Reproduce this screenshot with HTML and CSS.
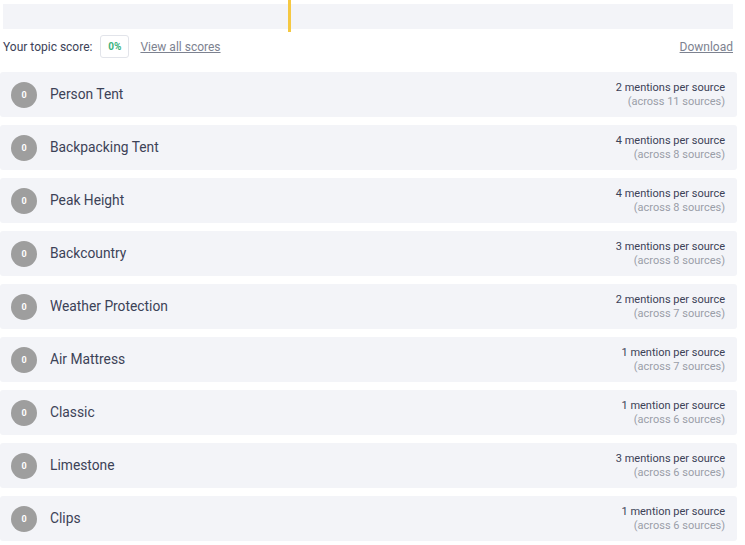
FILE: index.html
```html
<!DOCTYPE html>
<html>
<head>
<meta charset="utf-8">
<link rel="stylesheet" href="styles.css">
</head>
<body>
<div class="page">
  <div class="progress">
    <div class="marker"></div>
  </div>
  <div class="scoreline">
    <div class="score-left">
      <span class="label">Your topic score:</span>
      <span class="score-box">0%</span>
      <a class="link" href="#">View all scores</a>
    </div>
    <a class="link" href="#">Download</a>
  </div>
  <div class="list">
    <div class="row"><span class="badge">0</span><span class="name">Person Tent</span><div class="stats"><div class="main">2 mentions per source</div><div class="sub">(across 11 sources)</div></div></div>
    <div class="row"><span class="badge">0</span><span class="name">Backpacking Tent</span><div class="stats"><div class="main">4 mentions per source</div><div class="sub">(across 8 sources)</div></div></div>
    <div class="row"><span class="badge">0</span><span class="name">Peak Height</span><div class="stats"><div class="main">4 mentions per source</div><div class="sub">(across 8 sources)</div></div></div>
    <div class="row"><span class="badge">0</span><span class="name">Backcountry</span><div class="stats"><div class="main">3 mentions per source</div><div class="sub">(across 8 sources)</div></div></div>
    <div class="row"><span class="badge">0</span><span class="name">Weather Protection</span><div class="stats"><div class="main">2 mentions per source</div><div class="sub">(across 7 sources)</div></div></div>
    <div class="row"><span class="badge">0</span><span class="name">Air Mattress</span><div class="stats"><div class="main">1 mention per source</div><div class="sub">(across 7 sources)</div></div></div>
    <div class="row"><span class="badge">0</span><span class="name">Classic</span><div class="stats"><div class="main">1 mention per source</div><div class="sub">(across 6 sources)</div></div></div>
    <div class="row"><span class="badge">0</span><span class="name">Limestone</span><div class="stats"><div class="main">3 mentions per source</div><div class="sub">(across 6 sources)</div></div></div>
    <div class="row"><span class="badge">0</span><span class="name">Clips</span><div class="stats"><div class="main">1 mention per source</div><div class="sub">(across 6 sources)</div></div></div>
  </div>
</div>
</body>
</html>
```

FILE: styles.css
```css
* { box-sizing: border-box; }
html, body { margin: 0; padding: 0; background: #fff; }
body { font-family: Roboto, "Noto Sans", Arial, sans-serif; color: #3c4257; }
.page { width: 737px; padding-top: 4px; }
.progress {
  position: relative;
  margin-left: 3px;
  width: 730px;
  height: 25px;
  background: #f3f4f8;
}
.marker {
  position: absolute;
  left: 285px;
  top: -4px;
  width: 3px;
  height: 32px;
  background: #f5c842;
}
.scoreline {
  display: flex;
  justify-content: space-between;
  align-items: center;
  margin-top: 6px;
  padding-left: 3px;
  padding-right: 4px;
  height: 23px;
  font-size: 12px;
}
.score-left { display: flex; align-items: center; }
.label { color: #3c4257; }
.score-box {
  margin-left: 8px;
  width: 29px;
  height: 23px;
  border: 1px solid #e2e4ea;
  border-radius: 3px;
  display: flex;
  align-items: center;
  justify-content: center;
  color: #3bb37d;
  font-weight: 700;
  font-size: 10px;
}
.link {
  color: #7d8290;
  text-decoration: underline;
  margin-left: 11px;
}
.list {
  margin-top: 14px;
  display: flex;
  flex-direction: column;
  gap: 8px;
}
.row {
  height: 45px;
  background: #f3f4f8;
  border-radius: 3px;
  display: flex;
  align-items: center;
  padding-left: 11px;
  padding-right: 12px;
}
.badge {
  width: 26px;
  height: 26px;
  border-radius: 50%;
  background: #9e9e9e;
  color: #fff;
  font-size: 9px;
  font-weight: 700;
  display: flex;
  align-items: center;
  justify-content: center;
  flex-shrink: 0;
}
.name {
  margin-left: 13px;
  font-size: 13.8px;
  line-height: 16px;
  margin-bottom: 1px;
  color: #3c4257;
  flex: 1;
}
.stats {
  text-align: right;
  font-size: 11px;
  line-height: 14px;
}
.main { color: #3c4257; }
.sub { color: #9a9ea8; }
```
